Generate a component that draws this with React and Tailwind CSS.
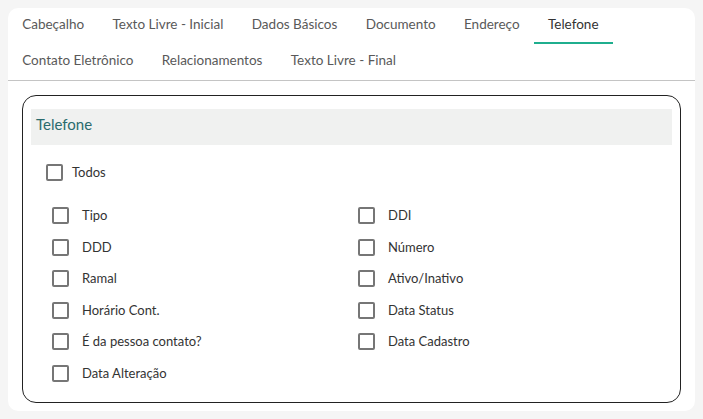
import { useState } from 'react';

const tabRows = [
  ['Cabeçalho', 'Texto Livre - Inicial', 'Dados Básicos', 'Documento', 'Endereço', 'Telefone'],
  ['Contato Eletrônico', 'Relacionamentos', 'Texto Livre - Final'],
];

const fields = [
  ['Tipo', 'DDI'],
  ['DDD', 'Número'],
  ['Ramal', 'Ativo/Inativo'],
  ['Horário Cont.', 'Data Status'],
  ['É da pessoa contato?', 'Data Cadastro'],
  ['Data Alteração', null],
];

function Check({ label, checked, onToggle, gap }) {
  return (
    <label className={`flex h-[17px] cursor-pointer items-center ${gap}`}>
      <input type="checkbox" checked={checked} onChange={onToggle} className="sr-only" />
      <span className="h-[17px] w-[17px] shrink-0 rounded-[2px] border-2 border-[#767676] bg-white" />
      <span className="text-[13px] leading-none text-[#333]">{label}</span>
    </label>
  );
}

export default function App() {
  const [active, setActive] = useState('Telefone');
  const [checked, setChecked] = useState({});
  const toggle = (name) => setChecked((prev) => ({ ...prev, [name]: !prev[name] }));

  return (
    <div className="min-h-screen bg-[#f5f5f5] p-2 font-['Lato',sans-serif]">
      <div className="h-[403px] rounded-[10px] bg-white">
        <div className="border-b border-[#c4c4c4]">
          {tabRows.map((row, i) => (
            <div key={i} className="flex">
              {row.map((tab) => (
                <button
                  key={tab}
                  onClick={() => setActive(tab)}
                  className={`relative flex h-9 items-center px-[14.2px] pb-[4px] text-[13.5px] ${active === tab ? 'text-[#333]' : 'text-[#595959]'}`}
                >
                  {tab}
                  {active === tab ? <span className="absolute bottom-0 left-0 right-0 h-[2px] bg-[#1fae8e]" /> : null}
                </button>
              ))}
            </div>
          ))}
        </div>

        <div className="px-[14px] pt-[14px]">
          <div className="h-[308px] rounded-[14px] border border-[#222] px-2 pt-[13px]">
            <div className="flex h-9 items-center bg-[#f0f1f0] pb-[5px] pl-[5px] text-[15px] text-[#2a6b6d]">Telefone</div>

            <div className="mt-[19px] pl-[15px]">
              <Check label="Todos" checked={!!checked.Todos} onToggle={() => toggle('Todos')} gap="gap-[9px]" />
            </div>

            <div className="mt-[26px] grid grid-cols-[306px_1fr] gap-y-[14.6px] pl-[21px]">
              {fields.map(([left, right]) => (
                <div key={left} className="contents">
                  <Check label={left} checked={!!checked[left]} onToggle={() => toggle(left)} gap="gap-[13px]" />
                  {right ? (
                    <Check label={right} checked={!!checked[right]} onToggle={() => toggle(right)} gap="gap-[13px]" />
                  ) : <div />}
                </div>
              ))}
            </div>
          </div>
        </div>
      </div>
    </div>
  );
}
